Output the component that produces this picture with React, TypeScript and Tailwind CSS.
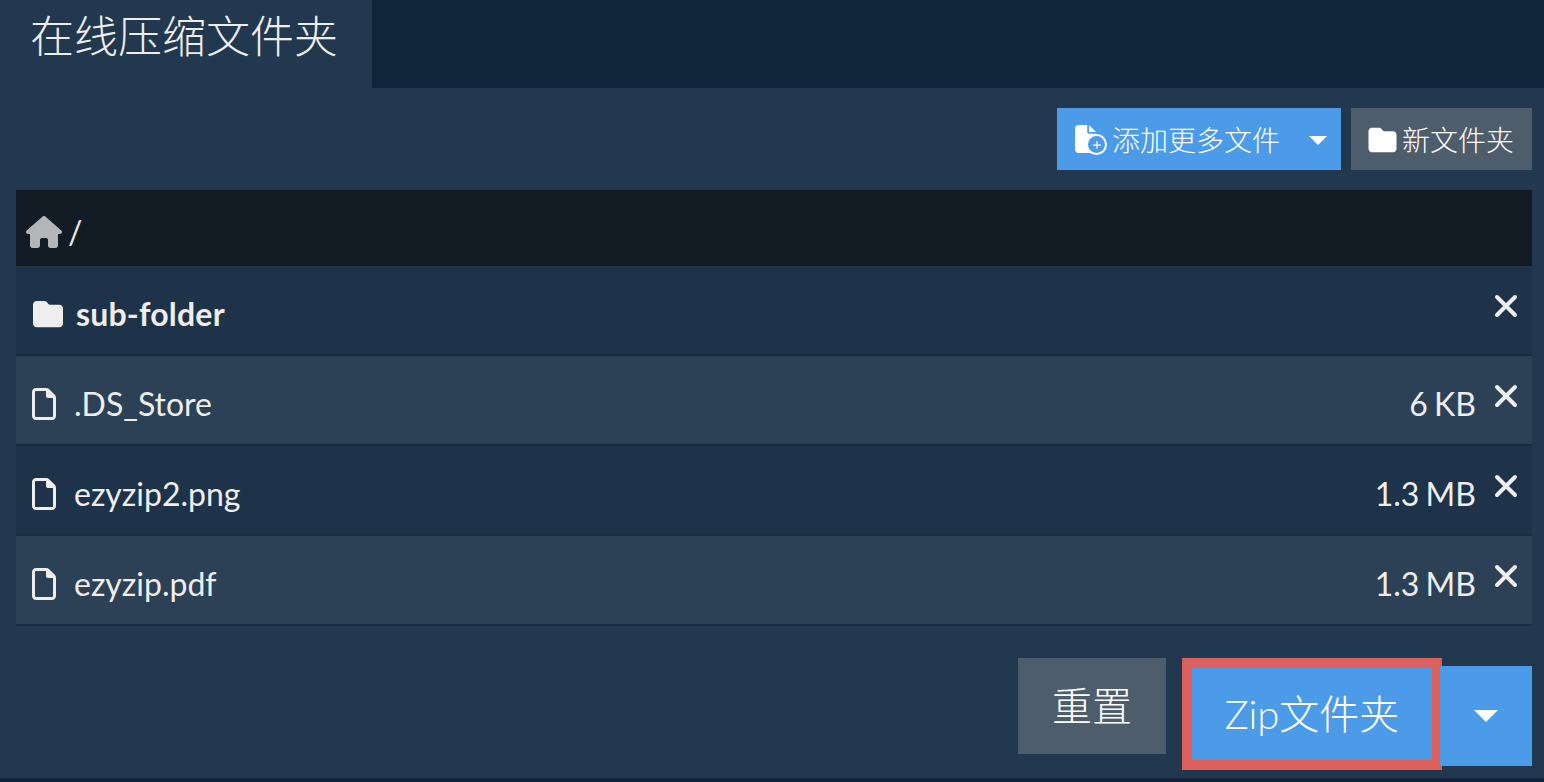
import { FaFile, FaFolder, FaHouse, FaPlus, FaRegFile } from "react-icons/fa6";

const sans = "font-['Lato','Noto_Sans_CJK_SC',sans-serif]";

const files = [
  { name: ".DS_Store", size: "6 KB", shade: true },
  { name: "ezyzip2.png", size: "1.3 MB", shade: false },
  { name: "ezyzip.pdf", size: "1.3 MB", shade: true },
];

function Caret({ className }: { className: string }) {
  return <span className={`h-0 w-0 border-x-transparent border-t-white ${className}`} />;
}

function CloseIcon({ className }: { className: string }) {
  return (
    <svg viewBox="0 0 24 24" className={`h-[24px] w-[24px] ${className}`} fill="none" stroke="currentColor" strokeWidth="4" strokeLinecap="round">
      <path d="M3 3 21 21M21 3 3 21" />
    </svg>
  );
}

function AddFileIcon() {
  return (
    <span className="relative mr-[4px] block h-[30px] w-[25px]">
      <FaFile className="absolute left-0 top-0 h-[28px] w-[21px] text-white" />
      <span className="absolute bottom-0 right-[-7px] flex h-[21px] w-[21px] items-center justify-center rounded-full border-2 border-white bg-[#4c9be8]">
        <FaPlus className="h-[10px] w-[10px] text-white" />
      </span>
    </span>
  );
}

export default function App() {
  return (
    <div className={`flex h-[782px] w-[1544px] flex-col overflow-hidden bg-[#22384f] text-white ${sans}`}>
      <div className="flex h-[88px] shrink-0 bg-[#10243a]">
        <div className="h-full w-[372px] bg-[#22384f] pl-[30px] pt-[8px] text-[44px] font-light leading-[56px] text-[#eeeeee]">
          在线压缩文件夹
        </div>
      </div>

      <div className="flex flex-1 flex-col pl-[16px] pr-[12px]">
        <div className="mt-[20px] flex justify-end gap-[10px]">
          <button className="flex h-[62px] w-[284px] items-center bg-[#4c9be8] pl-[18px] pt-[2px] text-[28px] font-light">
            <AddFileIcon />
            <span className="ml-[8px]">添加更多文件</span>
            <Caret className="ml-[29px] border-x-[9px] border-t-[9px]" />
          </button>
          <button className="flex h-[62px] w-[181px] items-center bg-[#4e5d6c] pl-[17px] pt-[2px] text-[28px] font-light">
            <FaFolder className="mr-[5px] h-[28px] w-[29px]" />
            <span>新文件夹</span>
          </button>
        </div>

        <div className="mt-[20px] flex h-[76px] items-center bg-[#121a24] pl-[10px] pt-[7px]">
          <FaHouse className="h-[32px] w-[36px] text-[#b4b5b6]" />
          <span className="ml-[6px] text-[32px] leading-none text-[#eeeeee]">/</span>
        </div>

        <div className="flex h-[90px] items-start justify-between border-b-2 border-[#1b2c3f] bg-[#1e3349] pl-[16px] pr-[14px] text-[#eeeeee]">
          <div className="mt-[29px] flex items-center">
            <FaFolder className="h-[30px] w-[32px] text-[#eeeeee]" />
            <span className="ml-[12px] text-[32px] font-bold leading-[38px] tracking-[0.2px]">sub-folder</span>
          </div>
          <CloseIcon className="mt-[28px]" />
        </div>

        {files.map((f) => (
          <div
            key={f.name}
            className={`flex h-[90px] items-start justify-between border-b-2 border-[#1b2c3f] pl-[16px] pr-[14px] text-[#eeeeee] ${f.shade ? "bg-[#2c4056]" : "bg-[#1e3349]"}`}
          >
            <div className="mt-[29px] flex items-center">
              <FaRegFile className="h-[32px] w-[24px]" />
              <span className="ml-[18px] text-[32px] leading-[38px]">{f.name}</span>
            </div>
            <div className="flex items-start">
              <span className="mt-[29px] text-[32px] leading-[38px] [word-spacing:-2px]">{f.size}</span>
              <CloseIcon className="ml-[18px] mt-[28px]" />
            </div>
          </div>
        ))}

        <div className="mt-[32px] flex items-start justify-end">
          <button className="h-[96px] w-[148px] bg-[#4e5d6c] text-[40px] font-light">重置</button>
          <button className="ml-[26px] mt-[10px] h-[92px] w-[240px] bg-[#4c9be8] text-[40px] font-light outline-[10px] outline-[#dc605c]">
            Zip文件夹
          </button>
          <button className="ml-[8px] mt-[8px] flex h-[100px] w-[92px] items-center justify-center bg-[#4c9be8]">
            <Caret className="border-x-[12px] border-t-[12px]" />
          </button>
        </div>
      </div>

      <div className="h-[4px] shrink-0 bg-[#10243a]" />
    </div>
  );
}
